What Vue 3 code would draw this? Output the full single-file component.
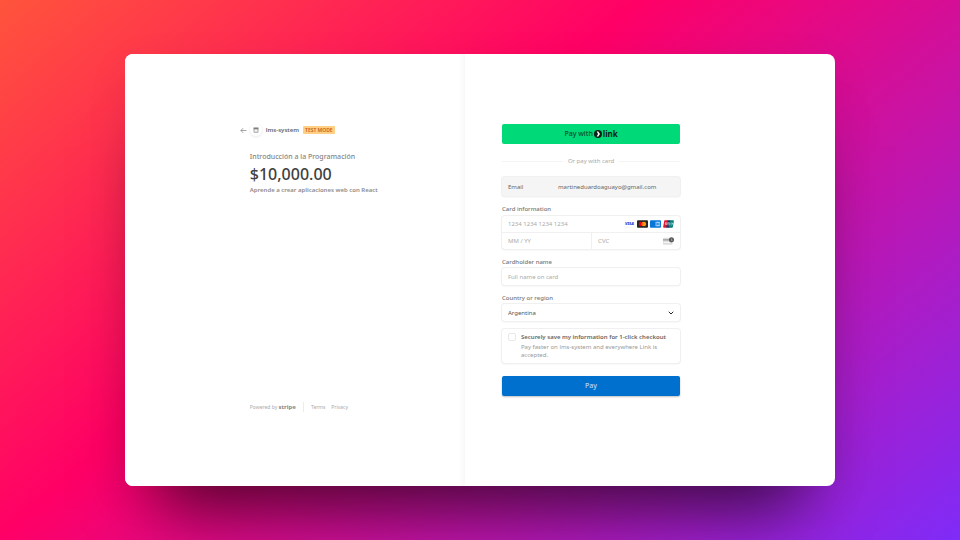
<script setup>
import { ref } from 'vue'

const email = ref('martineduardoaguayo@gmail.com')
const cardNumber = ref('')
const expiry = ref('')
const cvc = ref('')
const holder = ref('')
const country = ref('Argentina')
const countries = ['Argentina', 'Chile', 'Uruguay']
const saveInfo = ref(false)
</script>

<template>
  <div class="stage">
    <main class="window">
      <section class="summary">
        <header class="merchant">
          <a class="back" href="#" aria-label="Back">
            <svg viewBox="0 0 12 12" aria-hidden="true">
              <path d="M11 6H1.5M5.5 2 1.5 6l4 4" fill="none" stroke="#858585" stroke-width="1.3" />
            </svg>
          </a>
          <span class="avatar">
            <svg viewBox="0 0 12 12" aria-hidden="true">
              <rect x="1" y="1" width="10" height="3" fill="#777" />
              <path d="M2 4h8v6.500H2z" fill="#f6f6f6" stroke="#8a8a8a" stroke-width="1.5" />
            </svg>
          </span>
          <strong class="merchant-name">lms-system</strong>
          <span class="badge">TEST MODE</span>
        </header>

        <div class="product">
          <h1 class="product-name">Introducción a la Programación</h1>
          <p class="price">$10,000.00</p>
          <p class="description">Aprende a crear aplicaciones web con React</p>
        </div>

        <footer class="legal">
          <span class="powered">Powered by <b>stripe</b></span>
          <a href="#">Terms</a>
          <a href="#">Privacy</a>
        </footer>
      </section>

      <section class="payment">
        <form class="form" @submit.prevent>
          <button class="link-button" type="button">
            <span>Pay with</span>
            <svg class="link-mark" viewBox="0 0 18 18" aria-hidden="true">
              <circle cx="9" cy="9" r="9" fill="#0b2219" />
              <path d="M6 3.500h3.500L13.500 9l-4 5.500H6L9.200 9z" fill="#fff" />
            </svg>
            <b>link</b>
          </button>

          <div class="divider">Or pay with card</div>

          <div class="email-row">
            <label for="email">Email</label>
            <input id="email" v-model="email" type="email" readonly />
          </div>

          <fieldset class="group">
            <legend class="label">Card information</legend>
            <div class="card-box">
              <div class="card-number">
                <input v-model="cardNumber" aria-label="Card number" placeholder="1234 1234 1234 1234" />
                <span class="brands" aria-hidden="true">
                  <svg viewBox="0 0 24 16">
                    <rect x=".5" y=".5" width="23" height="15" rx="2" fill="#fff" stroke="#f0f0f6" />
                    <text x="12" y="11" text-anchor="middle" font-size="9" font-weight="800" font-style="italic" fill="#2230d8">VISA</text>
                  </svg>
                  <svg viewBox="0 0 24 16">
                    <rect width="24" height="16" rx="2" fill="#252525" />
                    <circle cx="9" cy="8" r="5" fill="#eb001b" />
                    <circle cx="15" cy="8" r="5" fill="#f79e1b" />
                    <path d="M12 4a5 5 0 0 1 0 8 5 5 0 0 1 0-8z" fill="#ff5f00" />
                  </svg>
                  <svg viewBox="0 0 24 16">
                    <rect width="24" height="16" rx="2" fill="#0878d8" />
                    <path d="M12 3h10v3l-2 2 2 2v3H12z" fill="#a9d3fa" />
                    <path d="m14 5 6 6m0-6-6 6M12 8h5" stroke="#0878d8" stroke-width="1.5" />
                  </svg>
                  <svg viewBox="0 0 24 16">
                    <path d="M4 0h7L8 16H2Q0 16 .4 14L2.500 2Q2.800 0 4 0z" fill="#df1734" />
                    <path d="M10 0h7l-3 16H7z" fill="#17375f" />
                    <path d="M16 0h6q2 0 1.600 2l-2 12q-.4 2-2 2H13z" fill="#047c79" />
                    <path d="M6 4 5 8q0 2 3 1l1-5M11 11V6q3-2 4 0v5M17 6h4l-2 5" fill="none" stroke="#e4eef0" stroke-width="1.500" />
                  </svg>
                </span>
              </div>
              <div class="card-extra">
                <input v-model="expiry" aria-label="Expiration" placeholder="MM / YY" />
                <div class="cvc">
                  <input v-model="cvc" aria-label="CVC" placeholder="CVC" />
                  <svg viewBox="0 0 24 16" aria-hidden="true">
                    <rect y="1" width="21" height="15" rx="2" fill="#dedede" />
                    <path d="M0 4h14v3H0z" fill="#a0a0a0" />
                    <path d="M2 10h14v2H2z" fill="#f8f8f8" />
                    <circle cx="18.500" cy="5.500" r="5.500" fill="#555" />
                    <path d="M17 3.500h3l-1.500 2q2 0 1.500 2h-3" fill="none" stroke="#ccc" />
                  </svg>
                </div>
              </div>
            </div>
          </fieldset>

          <div class="group">
            <label class="label" for="holder">Cardholder name</label>
            <input id="holder" v-model="holder" class="field" placeholder="Full name on card" />
          </div>

          <div class="group">
            <label class="label" for="country">Country or region</label>
            <div class="select">
              <select id="country" v-model="country" class="field">
                <option v-for="name in countries" :key="name">{{ name }}</option>
              </select>
              <svg viewBox="0 0 12 12" aria-hidden="true">
                <path d="m1.500 3.500 4.500 4.500 4.500-4.500" fill="none" stroke="#222" stroke-width="2" />
              </svg>
            </div>
          </div>

          <div class="save">
            <input id="save" v-model="saveInfo" type="checkbox" />
            <div>
              <label for="save">Securely save my information for 1-click checkout</label>
              <p>Pay faster on lms-system and everywhere Link is accepted.</p>
            </div>
          </div>

          <button class="pay" type="submit">Pay</button>
        </form>
      </section>
    </main>
  </div>
</template>

<style>
body {
  margin: 0;
}
</style>

<style scoped>
* {
  box-sizing: border-box;
}

.stage {
  min-height: 100vh;
  padding: 54px 13%;
  display: flex;
  background: linear-gradient(140deg, #ff543c 0%, #ff0066 40%, #7f2bf8 100%);
  font-family: "Noto Sans", "Open Sans", sans-serif;
  font-size: 6px;
  line-height: 8px;
  color: #666;
}

.window {
  flex: 1;
  display: grid;
  grid-template-columns: 340fr 370fr;
  background: #fff;
  border-radius: 8px;
  box-shadow: 0 58px 64px -34px rgba(0, 0, 0, 0.62), 0 12px 44px rgba(0, 0, 0, 0.07);
}

h1,
p {
  margin: 0;
}

a {
  color: inherit;
  text-decoration: none;
}

input,
select,
button {
  font: inherit;
  color: inherit;
  min-width: 0;
  margin: 0;
  padding: 0;
  border: 0;
  background: none;
}

input::placeholder {
  color: #aaa;
  opacity: 1;
}

/* Order summary */
.summary {
  display: flex;
  flex-direction: column;
  padding: 70px 32px 74px 125px;
  background: linear-gradient(to left, #f8f8f8, #fff 7px);
  border-radius: 8px 0 0 8px;
}

.merchant {
  display: flex;
  align-items: center;
  height: 12px;
  margin-left: -10px;
}

.back,
.back svg {
  display: block;
  width: 7px;
  height: 7px;
}

.avatar {
  display: grid;
  place-items: center;
  width: 12px;
  height: 12px;
  margin: 0 4px 0 3px;
  border-radius: 50%;
  box-shadow: 0 1px 3px rgba(0, 0, 0, 0.1);
}

.avatar svg {
  width: 6px;
  height: 6px;
}

.merchant-name {
  font-weight: 600;
  margin-right: 4px;
  color: #666;
}

.badge {
  padding: 0 2px;
  border-radius: 1px;
  background: #ffd083;
  color: #c0601c;
  font-size: 5px;
  font-weight: 600;
}

.product {
  margin-top: 16px;
}

.product-name {
  font-size: 7px;
  line-height: 10px;
  font-weight: 500;
  color: #858585;
}

.price {
  font-size: 16px;
  line-height: 24px;
  font-weight: 500;
  color: #404040;
}

.description {
  font-weight: 600;
  color: #8c8c8c;
}

.legal {
  display: flex;
  align-items: center;
  gap: 6px;
  margin-top: auto;
  font-size: 5px;
  line-height: 10px;
  color: #aaa;
}

.powered {
  padding-right: 7px;
  margin-right: 1px;
  border-right: 1px solid #ececec;
}

.powered b {
  font-size: 6px;
  color: #888;
}

/* Payment form */
.payment {
  padding: 70px 155px 70px 37px;
}

.form {
  display: flex;
  flex-direction: column;
}

.link-button,
.pay {
  height: 20px;
  border-radius: 2px;
  cursor: pointer;
}

.link-button {
  display: flex;
  align-items: center;
  justify-content: center;
  gap: 1px;
  background: #00d977;
  color: #0b4a30;
  font-size: 7px;
  font-weight: 500;
}

.link-button b {
  font-size: 8px;
  color: #0b2219;
}

.link-mark {
  width: 8px;
  height: 8px;
}

.divider {
  display: flex;
  align-items: center;
  gap: 5px;
  margin: 13px 0 12px;
  color: #aaa;
}

.divider::before,
.divider::after {
  content: "";
  flex: 1;
  height: 1px;
  background: #f4f4f4;
}

.email-row,
.card-box,
.field,
.save {
  border-radius: 3px;
  box-shadow: 0 0 0 1px #f0f0f0, 0 1px 2px rgba(0, 0, 0, 0.1);
}

.email-row {
  display: grid;
  grid-template-columns: 50px 1fr;
  align-items: center;
  height: 19px;
  padding: 0 6px;
  background: #f5f5f5;
}

.group {
  min-width: 0;
  margin: 9px 0 0;
  padding: 0;
  border: 0;
}

.label {
  display: block;
  padding: 0;
  margin-bottom: 2px;
  font-weight: 500;
  color: #777;
}

legend.label {
  margin-bottom: 3px;
}

.card-box {
  display: grid;
  grid-template-rows: 16px 17px;
}

.card-number,
.cvc {
  display: flex;
  align-items: center;
  padding: 0 6px;
}

.card-number input,
.cvc input {
  flex: 1;
}

.brands {
  display: flex;
  gap: 2px;
}

.brands svg,
.cvc svg {
  flex: none;
  width: 11px;
  height: 8px;
}

.card-extra {
  display: grid;
  grid-template-columns: minmax(0, 1fr) minmax(0, 1fr);
  border-top: 1px solid #f0f0f0;
}

.card-extra > input {
  padding: 0 6px;
}

.cvc {
  border-left: 1px solid #f0f0f0;
}

.field {
  display: block;
  width: 100%;
  height: 17px;
  padding: 0 6px;
  background: #fff;
}

.select {
  display: grid;
  align-items: center;
}

.select > * {
  grid-area: 1 / 1;
}

.select select {
  appearance: none;
  color: #555;
}

.select svg {
  justify-self: end;
  width: 6px;
  height: 6px;
  margin-right: 6px;
  pointer-events: none;
}

.save {
  display: flex;
  gap: 5px;
  margin-top: 8px;
  padding: 4px 6px;
}

.save input {
  appearance: none;
  flex: none;
  width: 8px;
  height: 8px;
  border: 1px solid #e8e8e8;
  border-radius: 2px;
}

.save input:checked {
  background: #0070cf;
}

.save label {
  display: block;
  margin-bottom: 2px;
  font-weight: 600;
  white-space: nowrap;
}

.save p {
  color: #999;
}

.pay {
  margin-top: 13px;
  background: #0070cf;
  color: #b9dbf7;
  font-size: 7px;
  font-weight: 500;
  box-shadow: 0 1px 2px rgba(0, 0, 0, 0.25);
}
</style>
